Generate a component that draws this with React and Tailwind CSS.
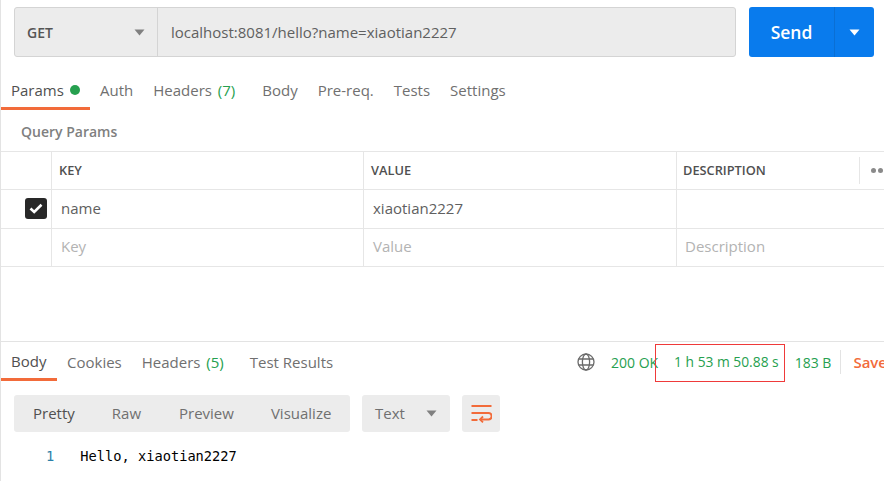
import React from "react";

const font = { fontFamily: '"Open Sans", sans-serif' };

const Caret = ({ className }) => (
  <svg width="11" height="7" viewBox="0 0 11 7" className={className}>
    <path d="M0.5 0.5h10L5.5 6.5z" fill="currentColor" />
  </svg>
);

const Globe = () => (
  <svg width="18" height="18" viewBox="0 0 18 18" fill="none" stroke="#6b6b6b" strokeWidth="1.3">
    <circle cx="9" cy="9" r="8" />
    <ellipse cx="9" cy="9" rx="3.6" ry="8" />
    <path d="M1.6 6h14.8M1.6 12h14.8" />
  </svg>
);

const WrapIcon = () => (
  <svg width="21" height="19" viewBox="0 0 21 19" fill="none" stroke="#f26b3a" strokeWidth="2.2">
    <path d="M0.5 2h20M0.5 9h17a2.8 2.8 0 0 1 0 6.5H9M0.5 16h6" />
    <path d="M12 12.5 9 15.5l3 2.8" strokeWidth="1.8" />
  </svg>
);

const cols = "grid grid-cols-[50px_312px_313px_1fr]";

const Cell = ({ className = "", children }) => (
  <div className={`flex items-center border-l border-[#e6e6e6] ${className}`}>{children}</div>
);

export default function App() {
  return (
    <div style={font} className="relative w-[884px] h-[481px] overflow-hidden bg-white border-l border-[#e3e3e3] text-[#6b6b6b]">
      {/* url bar */}
      <div className="flex h-[50px] mt-[7px] ml-[13px] w-[860px]">
        <div className="flex w-[722px] bg-[#ececec] border border-[#d4d4d4] rounded-[3px]">
          <div className="flex items-center justify-between w-[143px] pl-[12px] pr-[12px] border-r border-[#d4d4d4]">
            <span className="text-[14px] font-semibold text-[#555555]">GET</span>
            <Caret className="text-[#808080]" />
          </div>
          <div className="flex items-center pl-[13px] text-[15px] text-[#606060]">localhost:8081/hello?name=xiaotian2227</div>
        </div>
        <div className="flex ml-[13px] w-[125px] bg-[#097bed] rounded-[3px] text-white">
          <div className="flex items-center justify-center w-[86px] text-[17.5px] font-semibold border-r border-[#0a6fd4]">Send</div>
          <div className="flex flex-1 items-center justify-center"><Caret /></div>
        </div>
      </div>

      {/* request tabs */}
      <div className="flex h-[53px] items-start text-[15px] text-[#707070]">
        <div className="flex items-center h-[53px] w-[89px] pl-[10px] pt-[16px] border-b-[3px] border-[#f26b3a] text-[#505050]">
          Params
          <span className="ml-[6px] w-[10px] h-[10px] rounded-full bg-[#26a04f]" />
        </div>
        <div className="flex items-center h-[50px] pt-[16px]">
          <span className="ml-[10px]">Auth</span>
          <span className="ml-[20px]">Headers <span className="ml-[2px] text-[#26a04f]">(7)</span></span>
          <span className="ml-[27px]">Body</span>
          <span className="ml-[20px]">Pre-req.</span>
          <span className="ml-[20px]">Tests</span>
          <span className="ml-[20px]">Settings</span>
        </div>
      </div>

      <div className="h-[41px] pl-[20px] pt-[11px] text-[14px] font-semibold text-[#808080]">Query Params</div>

      {/* params table */}
      <div className="border-t border-[#e6e6e6]">
        <div className={`${cols} h-[38px] border-b border-[#e6e6e6] text-[12.8px] font-semibold text-[#505050]`}>
          <div />
          <Cell className="pl-[7px]">KEY</Cell>
          <Cell className="pl-[7px]">VALUE</Cell>
          <Cell className="pl-[6px] relative">
            DESCRIPTION
            <div className="absolute left-[182px] top-[5px] h-[27px] border-l border-[#e6e6e6]" />
            <div className="absolute left-[194px] top-[16px] flex gap-[2px]">
              <span className="w-[5px] h-[5px] rounded-full bg-[#8a8a8a]" />
              <span className="w-[5px] h-[5px] rounded-full bg-[#8a8a8a]" />
            </div>
          </Cell>
        </div>
        <div className={`${cols} h-[39px] border-b border-[#e6e6e6] text-[15px] text-[#606060]`}>
          <div className="flex items-center pl-[24px] pb-[2px]">
            <span className="flex items-center justify-center w-[22px] h-[21px] rounded-[3px] bg-[#282828]">
              <svg width="14" height="11" viewBox="0 0 14 11" fill="none" stroke="#fff" strokeWidth="2.6">
                <path d="M1.5 5.5 5.2 9 12.5 1.8" />
              </svg>
            </span>
          </div>
          <Cell className="pl-[9px] pb-[2px]">name</Cell>
          <Cell className="pl-[9px] pb-[2px]">xiaotian2227</Cell>
          <Cell />
        </div>
        <div className={`${cols} h-[38px] border-b border-[#e6e6e6] text-[15px] text-[#b3b3b3]`}>
          <div />
          <Cell className="pl-[9px] pb-[2px]">Key</Cell>
          <Cell className="pl-[9px] pb-[2px]">Value</Cell>
          <Cell className="pl-[8px] pb-[2px]">Description</Cell>
        </div>
      </div>

      {/* response */}
      <div className="mt-[74px] border-t border-[#e3e3e3] flex h-[40px] text-[15px] text-[#707070]">
        <div className="flex items-center shrink-0 w-[56px] pl-[10px] pt-[2px] border-b-[3px] border-[#f26b3a] text-[#505050]">Body</div>
        <div className="flex flex-1 items-center pb-[3px] pt-[4px]">
          <span className="ml-[10px]">Cookies</span>
          <span className="ml-[20px]">Headers <span className="ml-[2px] text-[#26a04f]">(5)</span></span>
          <span className="ml-[26px]">Test Results</span>
          <div className="flex items-center ml-auto -mr-[3px] shrink-0 text-[14px] text-[#26a04f]">
            <Globe />
            <span className="ml-[16px] whitespace-nowrap">200 OK</span>
            <span className="ml-[16px] text-[13.8px] whitespace-nowrap">1 h 53 m 50.88 s</span>
            <span className="ml-[16px] whitespace-nowrap">183 B</span>
            <span className="ml-[9px] h-[24px] border-l border-[#e3e3e3]" />
            <span className="ml-[12px] text-[15px] font-semibold text-[#f26b3a]">Save</span>
          </div>
        </div>
      </div>

      <div className="flex mt-[14px] ml-[13px] h-[37px] text-[15px] text-[#707070]">
        <div className="flex items-center w-[336px] rounded-[3px] bg-[#ececec]">
          <span className="ml-[19px] text-[#505050]">Pretty</span>
          <span className="ml-[37px]">Raw</span>
          <span className="ml-[38px]">Preview</span>
          <span className="ml-[37px]">Visualize</span>
        </div>
        <div className="flex items-center justify-between w-[88px] ml-[12px] px-[13px] rounded-[3px] bg-[#ececec]">
          Text
          <Caret className="text-[#808080]" />
        </div>
        <div className="flex items-center justify-center w-[38px] ml-[12px] rounded-[3px] bg-[#ececec]">
          <WrapIcon />
        </div>
      </div>

      <div className="flex items-center mt-[14px] h-[20px] text-[13.7px]" style={{ fontFamily: '"DejaVu Sans Mono", monospace' }}>
        <span className="ml-[45px] text-[#2b7fa8]">1</span>
        <span className="ml-[26px] text-black">Hello, xiaotian2227</span>
      </div>

      {/* red annotation box around the response time */}
      <div className="absolute left-[654px] top-[344px] w-[130px] h-[38px] border border-[#ef3a3a]" />
    </div>
  );
}
